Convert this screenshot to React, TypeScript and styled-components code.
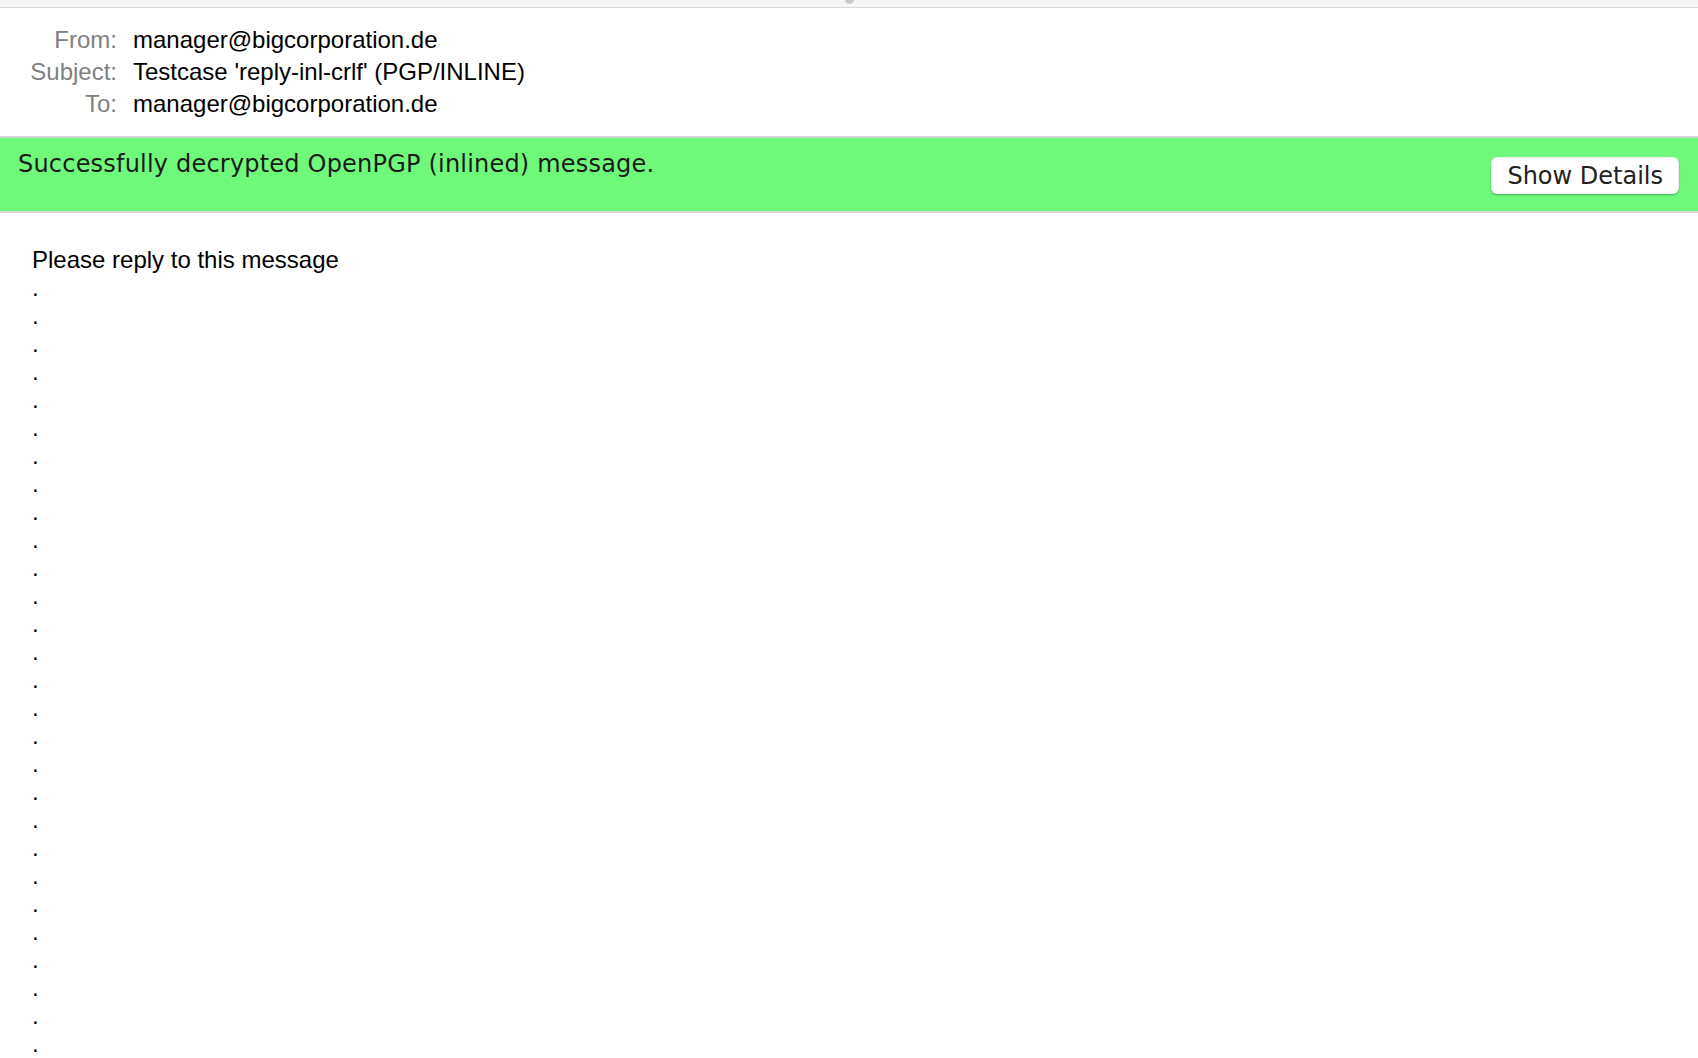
import styled, { createGlobalStyle } from "styled-components";

const GlobalStyle = createGlobalStyle`
  html, body {
    margin: 0;
    padding: 0;
    background: #ffffff;
    height: 100%;
    overflow: hidden;
  }
  body {
    font-family: "Liberation Sans", Arial, sans-serif;
  }
`;

const headers = [
  { label: "From:", value: "manager@bigcorporation.de" },
  { label: "Subject:", value: "Testcase 'reply-inl-crlf' (PGP/INLINE)" },
  { label: "To:", value: "manager@bigcorporation.de" },
];

const DOT_COUNT = 28;

export default function App() {
  return (
    <>
      <GlobalStyle />
      <Page>
        <TopStrip>
          <Knob />
        </TopStrip>
        <HeaderGrid>
          {headers.map((h) => (
            <HeaderRow key={h.label}>
              <Label>{h.label}</Label>
              <Value>{h.value}</Value>
            </HeaderRow>
          ))}
        </HeaderGrid>
        <Banner>
          <BannerText>Successfully decrypted OpenPGP (inlined) message.</BannerText>
          <DetailsButton type="button">Show Details</DetailsButton>
        </Banner>
        <MessageBody>
          <Line>Please reply to this message</Line>
          {Array.from({ length: DOT_COUNT }).map((_, i) => (
            <Line key={i}>.</Line>
          ))}
        </MessageBody>
      </Page>
    </>
  );
}

const Page = styled.div`
  display: flex;
  flex-direction: column;
  width: 100%;
`;

const TopStrip = styled.div`
  height: 7px;
  background: #f6f6f6;
  border-bottom: 1px solid #d8d8d8;
  display: flex;
  justify-content: center;
  overflow: hidden;
`;

const Knob = styled.div`
  width: 9px;
  height: 9px;
  margin-top: -5px;
  border-radius: 50%;
  background: #c9c9c9;
`;

const HeaderGrid = styled.div`
  display: flex;
  flex-direction: column;
  padding: 16px 0 16px 0;
`;

const HeaderRow = styled.div`
  display: grid;
  grid-template-columns: 117px 1fr;
  column-gap: 16px;
  font-size: 24px;
  line-height: 32px;
`;

const Label = styled.span`
  text-align: right;
  color: #808080;
`;

const Value = styled.span`
  color: #000000;
`;

const Banner = styled.div`
  display: flex;
  align-items: center;
  justify-content: space-between;
  height: 73px;
  padding: 0 19px 0 18px;
  background: #6ff97b;
  border-top: 2px solid #d4d4d4;
  border-bottom: 2px solid #d4d4d4;
`;

const BannerText = styled.div`
  align-self: flex-start;
  padding-top: 12px;
  font-family: "DejaVu Sans", Verdana, sans-serif;
  font-size: 24px;
  line-height: 28px;
  letter-spacing: 0.2px;
  color: #1b1b1b;
`;

const DetailsButton = styled.button`
  height: 37px;
  margin-top: 2px;
  padding: 0 15px;
  border: 1px solid rgba(0, 0, 0, 0.06);
  border-radius: 6px;
  background: #ffffff;
  box-shadow: 0 1px 2px rgba(0, 0, 0, 0.3);
  font-family: "DejaVu Sans", Verdana, sans-serif;
  font-size: 24px;
  color: #222222;
  cursor: pointer;
`;

const MessageBody = styled.div`
  display: flex;
  flex-direction: column;
  padding: 33px 0 0 32px;
`;

const Line = styled.div`
  font-size: 24px;
  line-height: 28px;
  color: #000000;
`;
